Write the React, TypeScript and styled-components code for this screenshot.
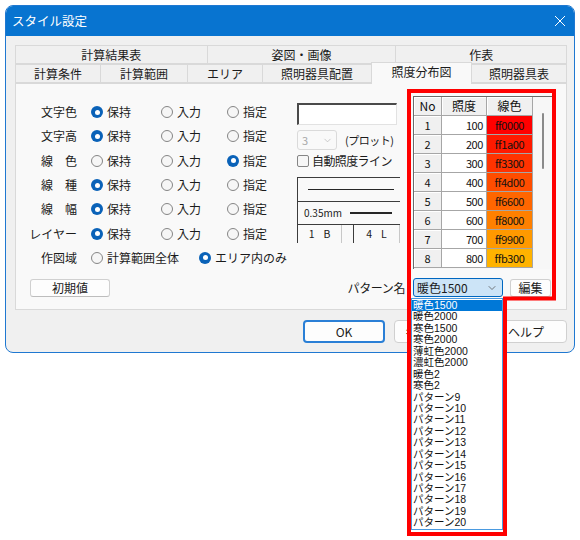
import React from "react";
import styled, { createGlobalStyle } from "styled-components";
import { ChevronDown } from "lucide-react";

const GlobalStyle = createGlobalStyle`
  html, body { margin: 0; padding: 0; background: #ffffff; }
  body {
    font-family: "Noto Sans CJK JP", "Noto Sans", sans-serif;
    font-size: 12px;
    color: #1b1b1b;
  }
  * { box-sizing: border-box; }
`;

const Page = styled.div`
  position: relative;
  width: 580px;
  height: 540px;
  padding: 5px;
`;

const Window = styled.div`
  width: 570px;
  height: 348px;
  border: 1px solid #1f78d1;
  border-radius: 8px;
  background: #f0f0f0;
  overflow: hidden;
  display: flex;
  flex-direction: column;
`;

const TitleBar = styled.div`
  height: 30px;
  flex: none;
  background: #0874d0;
  display: flex;
  align-items: center;
  justify-content: space-between;
  padding: 0 8px 0 6px;
  color: #ffffff;
  font-size: 12.5px;
  line-height: 30px;
`;

const CloseGlyph = styled.svg`
  width: 12px;
  height: 12px;
  display: block;
`;

const Body = styled.div`
  padding: 9px 7px 0 9px;
  display: flex;
  flex-direction: column;
`;

const TabRow = styled.div`
  display: flex;
  height: 19px;
  align-items: flex-end;
`;

const Tab = styled.div<{ $w: number; $active?: boolean }>`
  width: ${(p) => p.$w}px;
  height: ${(p) => (p.$active ? 22 : 19)}px;
  margin-bottom: ${(p) => (p.$active ? -1 : 0)}px;
  position: relative;
  z-index: ${(p) => (p.$active ? 2 : 1)};
  background: ${(p) => (p.$active ? "#f9f9f9" : "#f0f0f0")};
  border: 1px solid #d9d9d9;
  border-bottom: ${(p) => (p.$active ? "none" : "1px solid #d9d9d9")};
  margin-left: -1px;
  &:first-child { margin-left: 0; }
  display: flex;
  align-items: center;
  justify-content: center;
  font-size: 12px;
  line-height: 1;
  color: #1b1b1b;
  padding-bottom: ${(p) => (p.$active ? 4 : 0)}px;
`;

const Panel = styled.div`
  height: 227px;
  background: #f9f9f9;
  border: 1px solid #d9d9d9;
  display: flex;
  flex-direction: column;
`;

const TopArea = styled.div`
  display: flex;
  align-items: flex-start;
  height: 186px;
`;

const LeftForm = styled.div`
  width: 281px;
  margin-top: 16px;
  display: flex;
  flex-direction: column;
`;

const FormRow = styled.div`
  display: flex;
  align-items: center;
  height: 24.3px;
  line-height: 1;
`;

const RowLabel = styled.div`
  width: 61px;
  margin-right: 14px;
  text-align: right;
  white-space: nowrap;
`;

const Option = styled.div<{ $w?: number }>`
  display: flex;
  align-items: center;
  gap: 4px;
  width: ${(p) => (p.$w ? `${p.$w}px` : "auto")};
  white-space: nowrap;
`;

const RadioCircle = styled.span<{ $on?: boolean }>`
  flex: none;
  width: 12px;
  height: 12px;
  border-radius: 50%;
  display: flex;
  align-items: center;
  justify-content: center;
  background: ${(p) => (p.$on ? "#0a62b8" : "#f6f6f6")};
  border: ${(p) => (p.$on ? "none" : "1px solid #858585")};
  &::after {
    content: "";
    display: ${(p) => (p.$on ? "block" : "none")};
    width: 5px;
    height: 5px;
    border-radius: 50%;
    background: #ffffff;
  }
`;

const MidCol = styled.div`
  width: 103px;
  margin-top: 19px;
  display: flex;
  flex-direction: column;
`;

const SunkenField = styled.div`
  width: 100px;
  height: 22px;
  background: #ffffff;
  border-top: 2px solid #4a4a4a;
  border-left: 2px solid #4a4a4a;
  border-right: 1px solid #e2e2e2;
  border-bottom: 1px solid #e2e2e2;
`;

const ComboRow = styled.div`
  display: flex;
  align-items: center;
  margin-top: 5px;
  height: 20px;
  white-space: nowrap;
`;

const DisabledCombo = styled.div`
  width: 40px;
  height: 20px;
  border: 1px solid #dadada;
  border-radius: 3px;
  background: #f9f9f9;
  color: #a8a8a8;
  display: flex;
  align-items: center;
  justify-content: space-between;
  padding: 0 3px 0 4px;
  font-size: 11px;
`;

const SmallNote = styled.span`
  margin-left: 8px;
  font-size: 11px;
  letter-spacing: -0.5px;
`;

const CheckRow = styled.div`
  display: flex;
  align-items: center;
  gap: 3px;
  margin-top: 3px;
  height: 15px;
  white-space: nowrap;
  letter-spacing: -0.6px;
`;

const CheckBox = styled.span`
  flex: none;
  width: 12px;
  height: 12px;
  border: 1px solid #858585;
  border-radius: 2px;
  background: #f6f6f6;
`;

const StyleBox = styled.div`
  width: 103px;
  height: 24px;
  border-top: 1px solid #3c3c3c;
  border-left: 1px solid #3c3c3c;
  display: flex;
  align-items: center;
`;

const LineBox = styled(StyleBox)`
  margin-top: 9px;
  padding: 0 6px 0 10px;
`;

const WidthBox = styled(StyleBox)`
  border-bottom: 1px solid #3c3c3c;
  padding: 0 8px 0 6px;
  font-size: 10px;
  line-height: 1;
`;

const Stroke = styled.div<{ $w?: number; $h: number }>`
  height: ${(p) => p.$h}px;
  background: #262626;
  flex: ${(p) => (p.$w ? "none" : "1")};
  width: ${(p) => (p.$w ? `${p.$w}px` : "auto")};
  margin-left: auto;
`;

const SmallBoxes = styled.div`
  display: flex;
  gap: 11px;
  height: 18px;
`;

const SmallBox = styled.div<{ $w: number }>`
  width: ${(p) => p.$w}px;
  border-left: 1px solid #3c3c3c;
  border-right: 1px solid #c8c8c8;
  display: flex;
  align-items: center;
  justify-content: center;
  gap: 9px;
  font-size: 10.5px;
  line-height: 1;
`;

const RightCol = styled.div`
  margin-left: 13px;
  margin-top: 12px;
  width: 140px;
`;

const TableFrame = styled.div`
  width: 139px;
  height: 173px;
  border-top: 1px solid #6a6a6a;
  border-left: 1px solid #6a6a6a;
  display: flex;
  overflow: hidden;
  background: #f7f7f7;
`;

const Grid = styled.div`
  display: grid;
  grid-template-columns: 28px 45px 46px;
  grid-auto-rows: 19px;
  font-size: 11px;
  line-height: 1;
`;

const Cell = styled.div<{ $kind: "head" | "no" | "num" | "color"; $bg?: string }>`
  border-right: 1px solid #a6a6a6;
  border-bottom: 1px solid #a6a6a6;
  display: flex;
  align-items: center;
  justify-content: ${(p) => (p.$kind === "num" ? "flex-end" : "center")};
  padding-right: ${(p) => (p.$kind === "num" ? 3 : 0)}px;
  background: ${(p) =>
    p.$kind === "num" ? "#ffffff" : p.$kind === "color" ? p.$bg : "#f0f0f0"};
  box-shadow: ${(p) =>
    p.$kind === "head" || p.$kind === "no" ? "inset 1px 1px 0 #ffffff" : "none"};
  font-size: ${(p) => (p.$kind === "head" ? 12 : 11)}px;
  letter-spacing: ${(p) => (p.$kind === "color" || p.$kind === "num" ? -0.4 : 0)}px;
  color: #111111;
`;

const ScrollTrack = styled.div`
  width: 19px;
  display: flex;
  justify-content: center;
  padding-top: 16px;
  background: #f7f7f7;
`;

const Thumb = styled.div`
  width: 2px;
  height: 56px;
  border-radius: 1px;
  background: #8a8a8a;
`;

const BottomRow = styled.div`
  display: flex;
  align-items: center;
  margin-top: 8px;
  height: 19px;
  padding: 0 15px 0 14px;
`;

const SmallButton = styled.div<{ $w: number }>`
  width: ${(p) => p.$w}px;
  height: 18px;
  background: #fdfdfd;
  border: 1px solid #d0d0d0;
  border-bottom-color: #bdbdbd;
  border-radius: 3px;
  display: flex;
  align-items: center;
  justify-content: center;
  line-height: 1;
`;

const Spacer = styled.div`
  flex: 1;
`;

const PatternLabel = styled.span`
  margin-right: 8px;
  line-height: 1;
  letter-spacing: -0.4px;
`;

const PatternCombo = styled.div`
  width: 90px;
  height: 19px;
  background: #cce4f7;
  border: 1px solid #0067c0;
  border-radius: 3px;
  display: flex;
  align-items: center;
  justify-content: space-between;
  padding: 0 4px 0 3px;
  line-height: 1;
  margin-right: 7px;
`;

const Footer = styled.div`
  display: flex;
  justify-content: flex-end;
  gap: 9px;
  padding-top: 10px;
`;

const DlgButton = styled.div<{ $default?: boolean }>`
  width: 82px;
  height: 23px;
  background: #fdfdfd;
  border: ${(p) => (p.$default ? "2px solid #2a7fd6" : "1px solid #d0d0d0")};
  border-radius: 4px;
  display: flex;
  align-items: center;
  justify-content: center;
  line-height: 1;
`;

const Annotation = styled.svg`
  position: absolute;
  left: 0;
  top: 0;
  width: 580px;
  height: 540px;
  pointer-events: none;
  z-index: 10;
`;

const DropList = styled.div`
  position: absolute;
  left: 411px;
  top: 298px;
  width: 92px;
  height: 232px;
  background: #ffffff;
  border: 1px solid #4a9ae0;
  z-index: 9;
  padding-top: 1px;
  font-family: "Liberation Sans", "Noto Sans CJK JP", sans-serif;
  font-size: 10.5px;
`;

const DropItem = styled.div<{ $sel?: boolean }>`
  height: 11.45px;
  line-height: 11.45px;
  padding-left: 1px;
  white-space: nowrap;
  color: ${(p) => (p.$sel ? "#ffffff" : "#111111")};
  background: ${(p) => (p.$sel ? "#0078d7" : "transparent")};
`;

const tabsTop = [
  { label: "計算結果表", w: 193 },
  { label: "姿図・画像", w: 190 },
  { label: "作表", w: 172 },
];

const tabsBottom = [
  { label: "計算条件", w: 86 },
  { label: "計算範囲", w: 88 },
  { label: "エリア", w: 76 },
  { label: "照明器具配置", w: 110 },
  { label: "照度分布図", w: 101, active: true },
  { label: "照明器具表", w: 96 },
];

const styleRows: { label: string; sel: number }[] = [
  { label: "文字色", sel: 0 },
  { label: "文字高", sel: 0 },
  { label: "線　色", sel: 2 },
  { label: "線　種", sel: 0 },
  { label: "線　幅", sel: 0 },
  { label: "レイヤー", sel: 0 },
];

const choices = ["保持", "入力", "指定"];
const choiceWidths = [70, 66, 0];

const tableRows: [number, number, string][] = [
  [1, 100, "ff0000"],
  [2, 200, "ff1a00"],
  [3, 300, "ff3300"],
  [4, 400, "ff4d00"],
  [5, 500, "ff6600"],
  [6, 600, "ff8000"],
  [7, 700, "ff9900"],
  [8, 800, "ffb300"],
];

const patterns = [
  "暖色1500",
  "暖色2000",
  "寒色1500",
  "寒色2000",
  "薄虹色2000",
  "濃虹色2000",
  "暖色2",
  "寒色2",
  ...Array.from({ length: 12 }, (_, i) => `パターン${i + 9}`),
];

export default function App() {
  return (
    <>
      <GlobalStyle />
      <Page>
        <Window>
          <TitleBar>
            <span>スタイル設定</span>
            <CloseGlyph viewBox="0 0 12 12">
              <path d="M1 1 L11 11 M11 1 L1 11" stroke="#ffffff" strokeWidth="1" fill="none" />
            </CloseGlyph>
          </TitleBar>
          <Body>
            <TabRow>
              {tabsTop.map((t) => (
                <Tab key={t.label} $w={t.w}>
                  {t.label}
                </Tab>
              ))}
            </TabRow>
            <TabRow>
              {tabsBottom.map((t) => (
                <Tab key={t.label} $w={t.w} $active={t.active}>
                  {t.label}
                </Tab>
              ))}
            </TabRow>
            <Panel>
              <TopArea>
                <LeftForm>
                  {styleRows.map((r) => (
                    <FormRow key={r.label}>
                      <RowLabel>{r.label}</RowLabel>
                      {choices.map((c, i) => (
                        <Option key={c} $w={choiceWidths[i]}>
                          <RadioCircle $on={r.sel === i} />
                          {c}
                        </Option>
                      ))}
                    </FormRow>
                  ))}
                  <FormRow>
                    <RowLabel>作図域</RowLabel>
                    <Option $w={108}>
                      <RadioCircle />
                      計算範囲全体
                    </Option>
                    <Option>
                      <RadioCircle $on />
                      エリア内のみ
                    </Option>
                  </FormRow>
                </LeftForm>
                <MidCol>
                  <SunkenField />
                  <ComboRow>
                    <DisabledCombo>
                      <span>3</span>
                      <ChevronDown size={11} strokeWidth={1.5} color="#b4b4b4" />
                    </DisabledCombo>
                    <SmallNote>(プロット)</SmallNote>
                  </ComboRow>
                  <CheckRow>
                    <CheckBox />
                    自動照度ライン
                  </CheckRow>
                  <LineBox>
                    <Stroke $h={1.5} />
                  </LineBox>
                  <WidthBox>
                    <span>0.35mm</span>
                    <Stroke $w={42} $h={2} />
                  </WidthBox>
                  <SmallBoxes>
                    <SmallBox $w={45}>
                      <span>1</span>
                      <span>B</span>
                    </SmallBox>
                    <SmallBox $w={47}>
                      <span>4</span>
                      <span>L</span>
                    </SmallBox>
                  </SmallBoxes>
                </MidCol>
                <RightCol>
                  <TableFrame>
                    <Grid>
                      <Cell $kind="head">No</Cell>
                      <Cell $kind="head">照度</Cell>
                      <Cell $kind="head">線色</Cell>
                      {tableRows.map(([n, lx, hex]) => (
                        <React.Fragment key={n}>
                          <Cell $kind="no">{n}</Cell>
                          <Cell $kind="num">{lx}</Cell>
                          <Cell $kind="color" $bg={`#${hex}`}>
                            {hex}
                          </Cell>
                        </React.Fragment>
                      ))}
                    </Grid>
                    <ScrollTrack>
                      <Thumb />
                    </ScrollTrack>
                  </TableFrame>
                </RightCol>
              </TopArea>
              <BottomRow>
                <SmallButton $w={80}>初期値</SmallButton>
                <Spacer />
                <PatternLabel>パターン名</PatternLabel>
                <PatternCombo>
                  <span>暖色1500</span>
                  <ChevronDown size={12} strokeWidth={1.5} color="#505050" />
                </PatternCombo>
                <SmallButton $w={41}>編集</SmallButton>
              </BottomRow>
            </Panel>
            <Footer>
              <DlgButton $default>OK</DlgButton>
              <DlgButton>キャンセル</DlgButton>
              <DlgButton>ヘルプ</DlgButton>
            </Footer>
          </Body>
        </Window>
        <DropList>
          {patterns.map((p, i) => (
            <DropItem key={p} $sel={i === 0}>
              {p}
            </DropItem>
          ))}
        </DropList>
        <Annotation viewBox="0 0 580 540">
          <path
            d="M409 91 H554 V298.5 H505 V534 H409 Z"
            fill="none"
            stroke="#ff0000"
            strokeWidth="4"
          />
        </Annotation>
      </Page>
    </>
  );
}
